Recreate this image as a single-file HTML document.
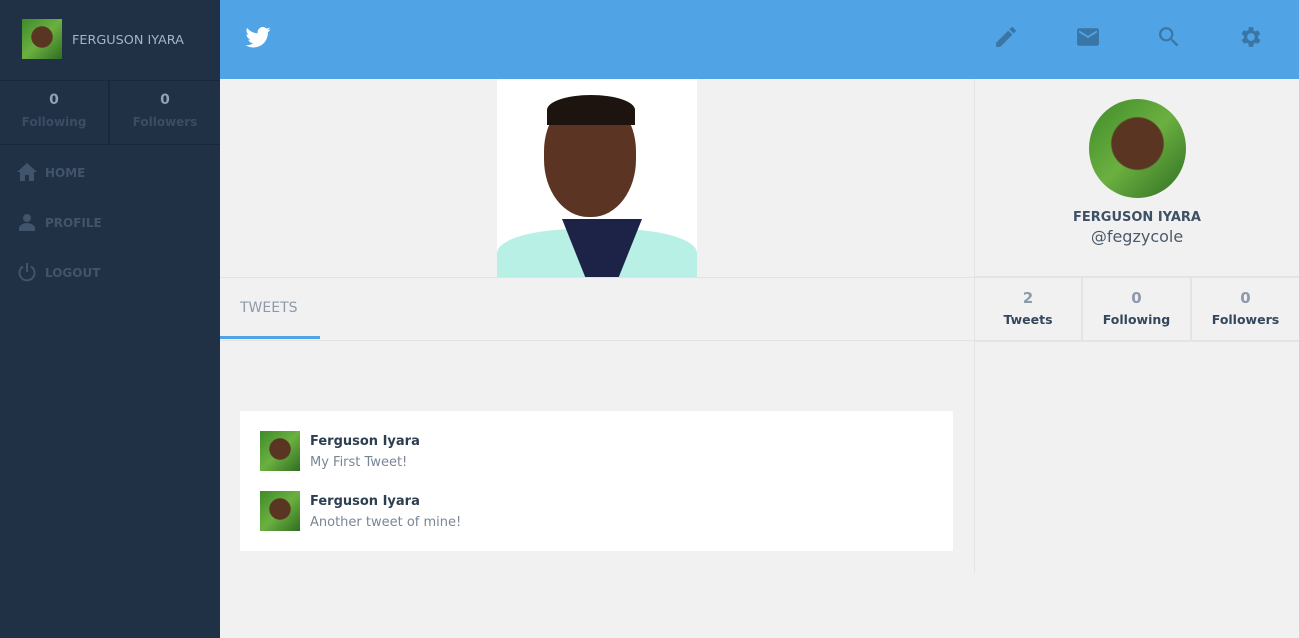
<!DOCTYPE html>
<html><head><meta charset="utf-8"><style>
*{margin:0;padding:0;box-sizing:border-box}
body{width:1299px;height:638px;background:#f1f1f1;font-family:"DejaVu Sans",sans-serif;position:relative;overflow:hidden}
.side{position:absolute;left:0;top:0;width:220px;height:638px;background:#203045}
.av{background:radial-gradient(circle at 50% 45%,#5a3522 0 35%,transparent 37%),linear-gradient(135deg,#3f8a2a,#6bb040,#2f6e22)}
.hdr{position:absolute;left:220px;top:0;width:1079px;height:79px;background:#50a3e4}
.abs{position:absolute}
</style></head><body>
<div class="side">
 <div class="abs av" style="left:22px;top:19px;width:40px;height:40px"></div>
 <div class="abs" style="left:72px;top:33px;font-size:12.8px;color:#a7b4c4">FERGUSON IYARA</div>
 <div class="abs" style="left:0;top:80px;width:220px;height:1px;background:#1a2839"></div>
 <div class="abs" style="left:108px;top:80px;width:2px;height:64px;background:#1a2839"></div>
 <div class="abs" style="left:0;top:144px;width:220px;height:1px;background:#1a2839"></div>
 <div class="abs" style="left:0;top:92px;width:108px;text-align:center;font-weight:bold;font-size:14px;color:#8ea2b8">0</div>
 <div class="abs" style="left:0;top:115px;width:108px;text-align:center;font-weight:bold;font-size:12px;color:#3a4d64">Following</div>
 <div class="abs" style="left:110px;top:92px;width:110px;text-align:center;font-weight:bold;font-size:14px;color:#8ea2b8">0</div>
 <div class="abs" style="left:110px;top:115px;width:110px;text-align:center;font-weight:bold;font-size:12px;color:#3a4d64">Followers</div>
 <svg class="abs" style="left:17px;top:163px" width="20" height="18" viewBox="0 0 20 18"><path d="M10 0L0 9h3v9h5v-6h4v6h5V9h3z" fill="#40546b"/></svg>
 <div class="abs" style="left:45px;top:166px;font-size:12px;font-weight:bold;color:#40546b">HOME</div>
 <svg class="abs" style="left:18px;top:213px" width="18" height="18" viewBox="0 0 18 18"><circle cx="9" cy="5" r="4" fill="#40546b"/><path d="M1 18v-3c0-3 5-5 8-5s8 2 8 5v3z" fill="#40546b"/></svg>
 <div class="abs" style="left:45px;top:216px;font-size:12px;font-weight:bold;color:#40546b">PROFILE</div>
 <svg class="abs" style="left:17px;top:262px" width="20" height="20" viewBox="0 0 20 20"><path d="M6 4.5A7.5 7.5 0 1 0 14 4.5" fill="none" stroke="#40546b" stroke-width="2"/><path d="M10 1v9" stroke="#40546b" stroke-width="2"/></svg>
 <div class="abs" style="left:45px;top:266px;font-size:12px;font-weight:bold;color:#40546b">LOGOUT</div>
</div>
<div class="hdr">
 <svg class="abs" style="left:25px;top:27px" width="26" height="21" viewBox="0 0 24 20"><path d="M24 2.4a10 10 0 0 1-2.8.8A5 5 0 0 0 23.3.4a10 10 0 0 1-3.1 1.2A4.9 4.9 0 0 0 11.8 6 14 14 0 0 1 1.7.9a4.9 4.9 0 0 0 1.5 6.6A4.9 4.9 0 0 1 1 6.9 4.9 4.9 0 0 0 4.9 11.8a5 5 0 0 1-2.2.1 4.9 4.9 0 0 0 4.6 3.4A9.9 9.9 0 0 1 0 17.3 14 14 0 0 0 7.5 19.5c9.1 0 14-7.5 14-14v-.6A10 10 0 0 0 24 2.4z" fill="#fff"/></svg>
 <svg class="abs" style="left:775px;top:26px" width="22" height="22" viewBox="2 2 20 20"><path d="M3 17.25V21h3.75L17.8 9.94l-3.75-3.75zM20.7 7.04a1 1 0 0 0 0-1.41l-2.34-2.34a1 1 0 0 0-1.41 0l-1.83 1.83 3.75 3.75z" fill="#3a76a5"/></svg>
 <svg class="abs" style="left:857px;top:28px" width="22" height="18" viewBox="0 0 20 16"><path d="M18 0H2C.9 0 0 .9 0 2v12c0 1.1.9 2 2 2h16c1.1 0 2-.9 2-2V2c0-1.1-.9-2-2-2zm0 4l-8 5-8-5V2l8 5 8-5z" fill="#3a76a5"/></svg>
 <svg class="abs" style="left:938px;top:26px" width="22" height="22" viewBox="2 2 20 20"><path d="M15.5 14h-.8l-.3-.3A6.5 6.5 0 1 0 9.5 16a6.5 6.5 0 0 0 4.2-1.6l.3.3v.8l5 5 1.5-1.5zm-6 0A4.5 4.5 0 1 1 14 9.5 4.5 4.5 0 0 1 9.5 14z" fill="#3a76a5"/></svg>
 <svg class="abs" style="left:1019px;top:25px" width="24" height="24" viewBox="1 1 22 22"><path d="M19.4 13a7.5 7.5 0 0 0 0-2l2.1-1.6-2-3.5-2.5 1a7 7 0 0 0-1.7-1L15 3h-4l-.4 2.7a7 7 0 0 0-1.7 1l-2.5-1-2 3.5L6.6 11a7.5 7.5 0 0 0 0 2l-2.1 1.6 2 3.5 2.5-1a7 7 0 0 0 1.7 1L11 21h4l.4-2.7a7 7 0 0 0 1.7-1l2.5 1 2-3.5zM13 15.5a3.5 3.5 0 1 1 0-7 3.5 3.5 0 0 1 0 7z" fill="#3a76a5" transform="translate(-1 0)"/></svg>
</div>
<div class="abs" style="left:497px;top:79px;width:200px;height:198px;background:#fff;overflow:hidden">
 <div class="abs" style="left:47px;top:18px;width:92px;height:120px;border-radius:45% 45% 48% 48%;background:#5b3424"></div>
 <div class="abs" style="left:50px;top:16px;width:88px;height:30px;border-radius:50% 50% 0 0;background:#1e140f"></div>
 <div class="abs" style="left:0;top:150px;width:200px;height:60px;border-radius:40% 40% 0 0;background:#b9f0e6"></div>
 <div class="abs" style="left:65px;top:140px;width:80px;height:60px;background:#1c2347;clip-path:polygon(0 0,100% 0,70% 100%,30% 100%)"></div>
</div>
<div class="abs" style="left:220px;top:277px;width:754px;height:1px;background:#e2e2e2"></div>
<div class="abs" style="left:240px;top:300px;font-size:14px;color:#8c9aab">TWEETS</div>
<div class="abs" style="left:220px;top:336px;width:100px;height:3px;background:#50a3e4"></div>
<div class="abs" style="left:220px;top:340px;width:754px;height:1px;background:#e2e2e2"></div>
<div class="abs" style="left:240px;top:411px;width:713px;height:140px;background:#fff">
 <div class="abs av" style="left:20px;top:20px;width:40px;height:40px"></div>
 <div class="abs" style="left:70px;top:23px;font-size:13px;font-weight:bold;color:#2d3e50">Ferguson Iyara</div>
 <div class="abs" style="left:70px;top:44px;font-size:13px;color:#7a8695">My First Tweet!</div>
 <div class="abs av" style="left:20px;top:80px;width:40px;height:40px"></div>
 <div class="abs" style="left:70px;top:83px;font-size:13px;font-weight:bold;color:#2d3e50">Ferguson Iyara</div>
 <div class="abs" style="left:70px;top:104px;font-size:13px;color:#7a8695">Another tweet of mine!</div>
</div>
<div class="abs" style="left:974px;top:79px;width:1px;height:493px;background:#e4e4e4"></div>
<div class="abs av" style="left:1089px;top:99px;width:97px;height:99px;border-radius:50%"></div>
<div class="abs" style="left:975px;top:210px;width:324px;text-align:center;font-size:13px;font-weight:bold;color:#3e5065">FERGUSON IYARA</div>
<div class="abs" style="left:975px;top:227px;width:324px;text-align:center;font-size:16px;color:#4a5a6b">@fegzycole</div>
<div class="abs" style="left:975px;top:276px;width:324px;height:2px;background:#e4e4e4"></div>
<div class="abs" style="left:975px;top:340px;width:324px;height:2px;background:#e4e4e4"></div>
<div class="abs" style="left:1081px;top:278px;width:2px;height:62px;background:#e4e4e4"></div>
<div class="abs" style="left:1190px;top:278px;width:2px;height:62px;background:#e4e4e4"></div>
<div class="abs" style="left:975px;top:289px;width:106px;text-align:center;font-size:15px;font-weight:bold;color:#8c9aab">2</div>
<div class="abs" style="left:975px;top:312px;width:106px;text-align:center;font-size:12.5px;font-weight:bold;color:#34475c">Tweets</div>
<div class="abs" style="left:1083px;top:289px;width:107px;text-align:center;font-size:15px;font-weight:bold;color:#8c9aab">0</div>
<div class="abs" style="left:1083px;top:312px;width:107px;text-align:center;font-size:12.5px;font-weight:bold;color:#34475c">Following</div>
<div class="abs" style="left:1192px;top:289px;width:107px;text-align:center;font-size:15px;font-weight:bold;color:#8c9aab">0</div>
<div class="abs" style="left:1192px;top:312px;width:107px;text-align:center;font-size:12.5px;font-weight:bold;color:#34475c">Followers</div>
</body></html>
